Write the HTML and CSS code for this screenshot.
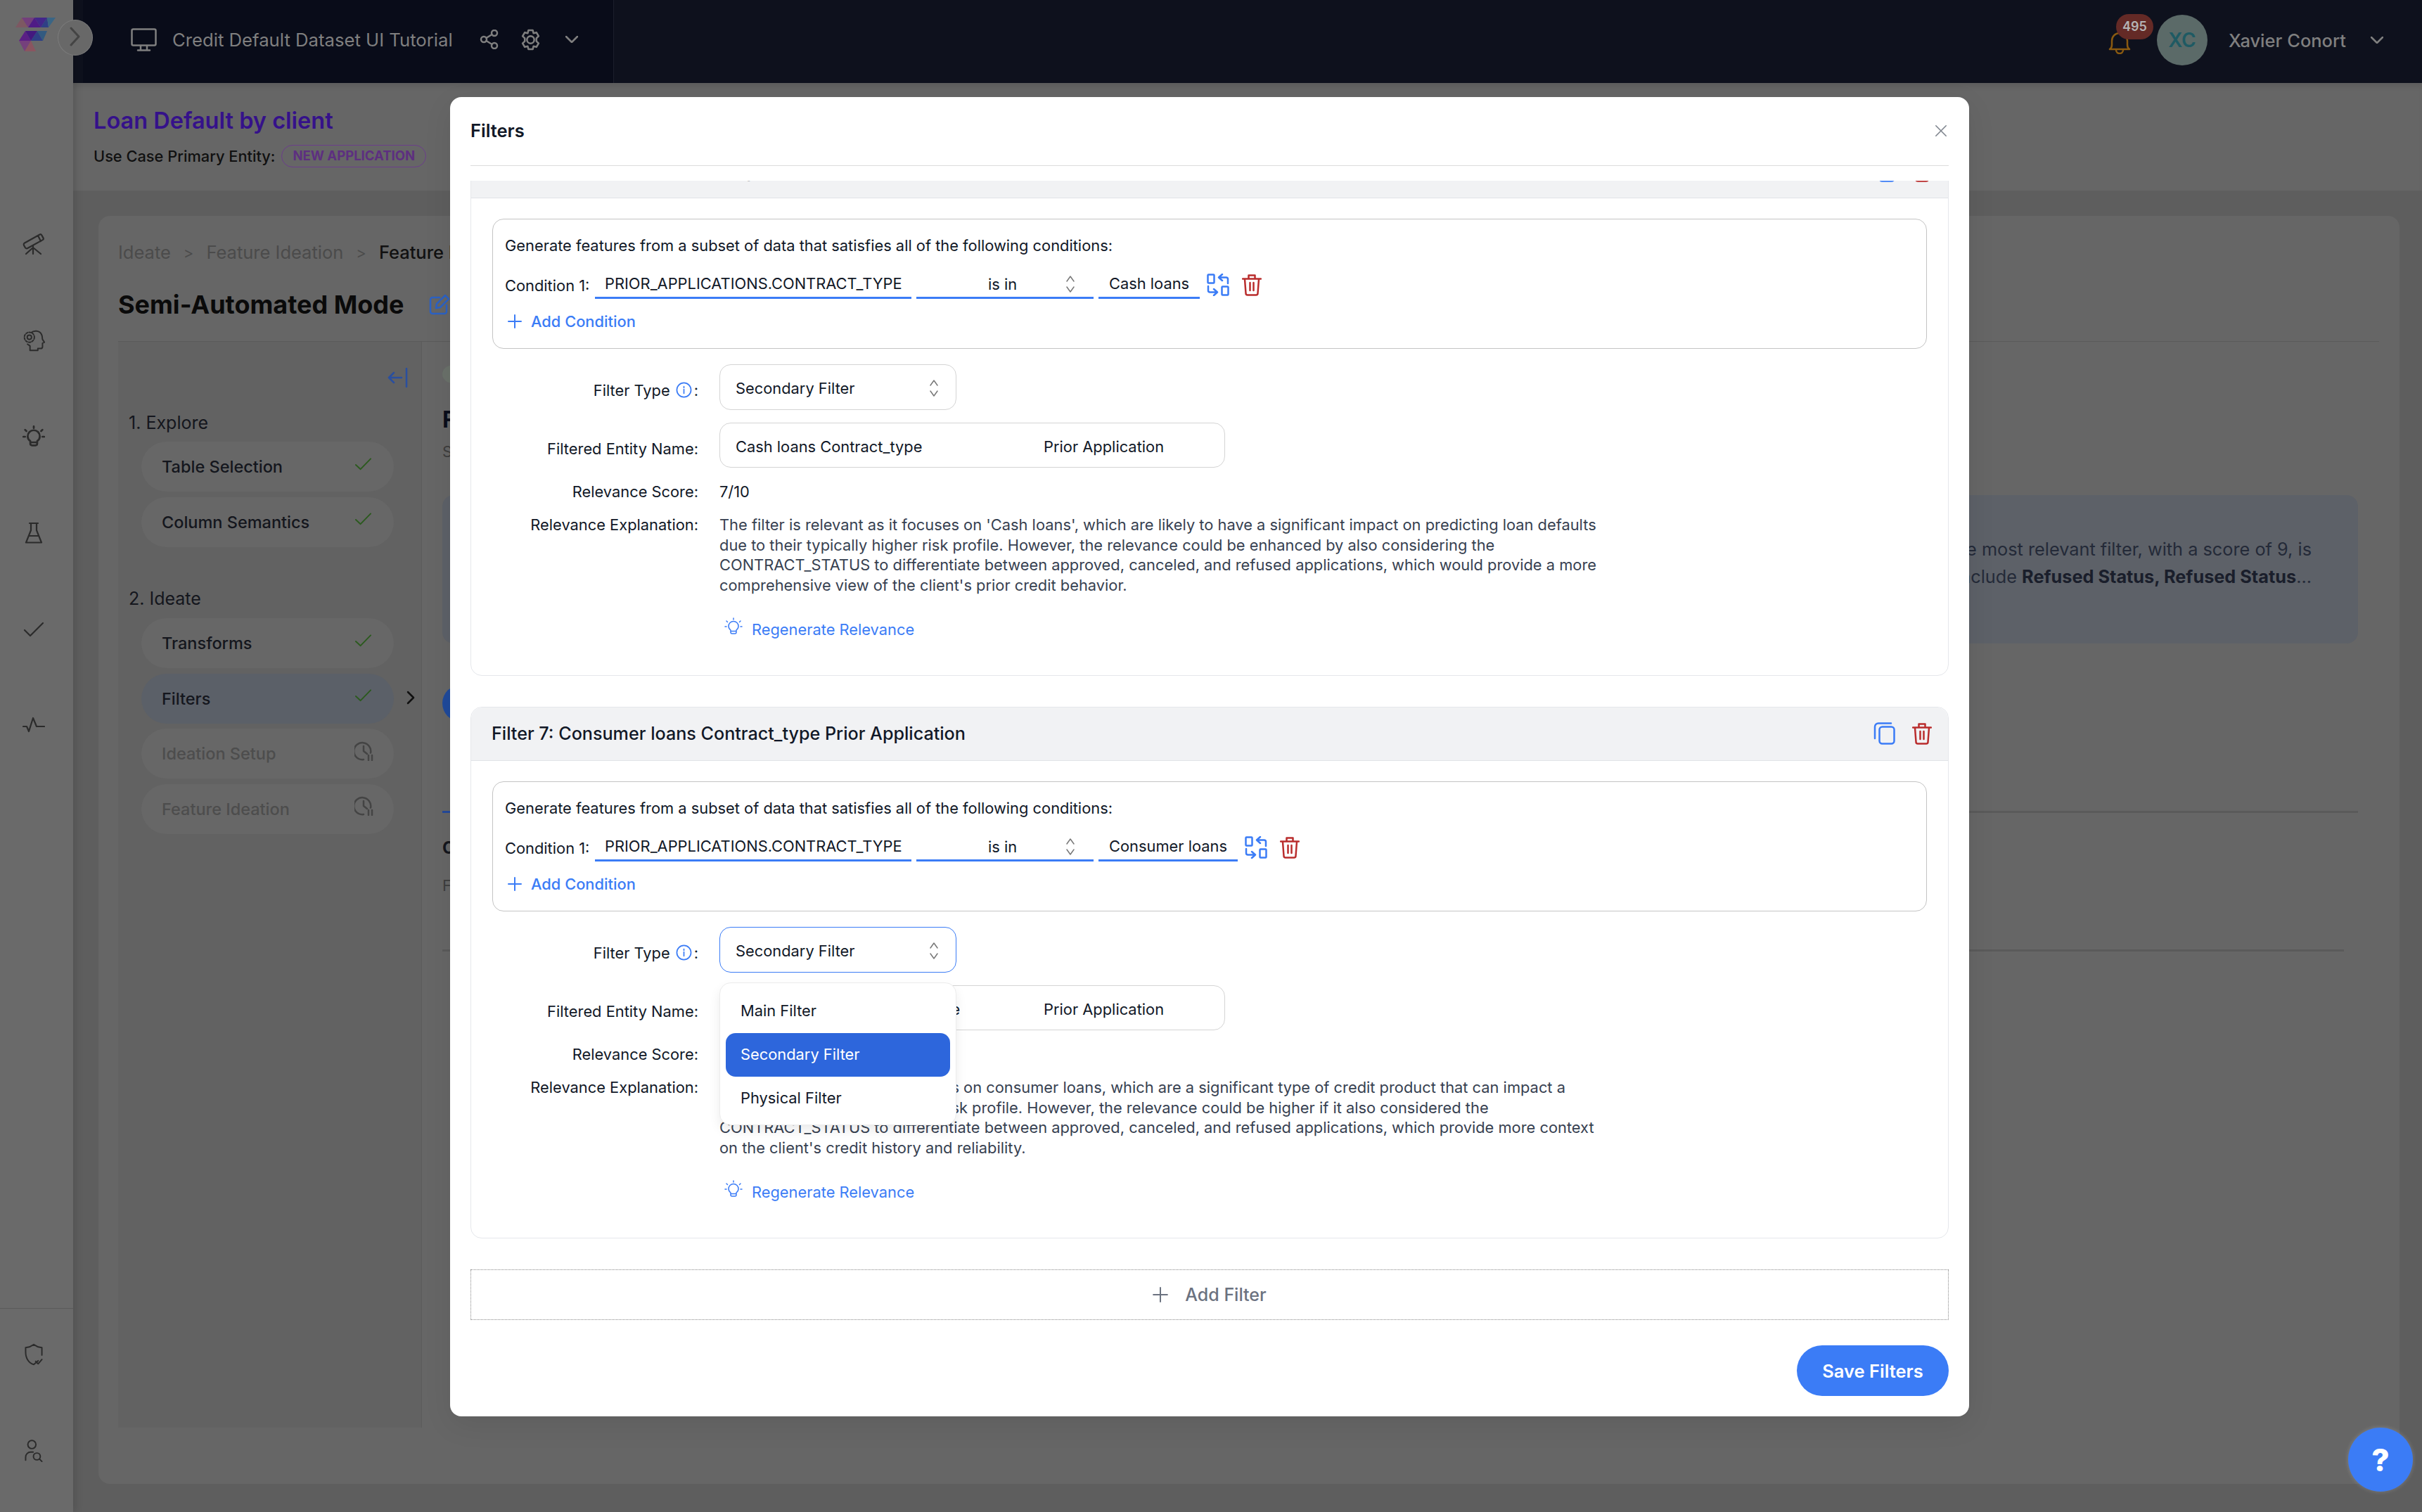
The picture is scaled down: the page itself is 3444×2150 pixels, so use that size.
FILE: index.html
```html
<!DOCTYPE html>
<html lang="en">
<head>
  <meta charset="UTF-8">
  <meta name="viewport" content="width=device-width, initial-scale=1.0">
  <title>Credit Default Dataset UI Tutorial</title>
  <link rel="stylesheet" href="styles.css">
</head>
<body>
  <svg class="sprite" aria-hidden="true">
    <symbol id="i-swap" viewBox="0 0 32 32"><rect x="1.500" y="1.500" width="9" height="12" rx="1"/><rect x="21.500" y="18.500" width="9" height="12" rx="1"/><path d="M30 14V8a2.500 2.500 0 0 0-2.500-2.500H17M22 1l-5 4.500 5 4.500M2 18v6a2.500 2.500 0 0 0 2.500 2.500H15M10 22l5 4.500-5 4.500"/></symbol>
    <symbol id="i-trash" viewBox="0 0 28 32"><path d="M1 7.500h26M9.500 7V2.500h9V7M4 8l1.500 20a2.500 2.500 0 0 0 2.500 2.500h12a2.500 2.500 0 0 0 2.500-2.500L24 8M11.500 13v11M16.500 13v11"/></symbol>
    <symbol id="i-copy" viewBox="0 0 32 32"><rect x="8.500" y="6.500" width="21" height="24" rx="4"/><path d="M25 1.500H7a5 5 0 0 0-5 5V23"/></symbol>
    <symbol id="i-updown" viewBox="0 0 14 26"><path d="M2 9l5-7 5 7M2 17l5 7 5-7"/></symbol>
    <symbol id="i-info" viewBox="0 0 24 24"><circle cx="12" cy="12" r="10.500"/><path d="M12 11v6M12 7v1.500"/></symbol>
    <symbol id="i-bulb" viewBox="0 0 26 26"><path d="M13 1v2M3 5l1.500 1.500M23 5l-1.500 1.500M1 13h2M23 13h2M9 18c-2-1.500-3-3.500-3-5.500a7 7 0 0 1 14 0c0 2-1 4-3 5.500v3a2 2 0 0 1-2 2h-4a2 2 0 0 1-2-2zM9 19.500h8"/></symbol>
    <symbol id="i-plus" viewBox="0 0 20 20"><path d="M10 1v18M1 10h18"/></symbol>
    <symbol id="i-check" viewBox="0 0 24 18"><path d="M1 10l7 6.500L23 1"/></symbol>
    <symbol id="i-clock" viewBox="0 0 28 28"><path d="M23 16.500A12 12 0 1 0 13 26M13 7v7l5 4M20 20v7M25 20v7"/></symbol>
    <symbol id="i-chev-down" viewBox="0 0 18 10"><path d="M1 1l8 8 8-8"/></symbol>
  </svg>

  <aside class="rail">
    <svg class="logo" viewBox="0 0 57 48">
      <polygon points="0,14 9,0 18,14" fill="#7d5862"/>
      <polygon points="9,0 27,0 18,14" fill="#733f7c"/>
      <polygon points="18,14 27,0 36,14" fill="#4f1b86"/>
      <polygon points="27,0 45,0 36,14" fill="#43268a"/>
      <polygon points="36,14 45,0 47,14" fill="#2f3f86"/>
      <polygon points="45,0 57,0 47,14" fill="#3a6585"/>
      <polygon points="5,33 14,19 22,33" fill="#5a1f85"/>
      <polygon points="14,19 31,19 22,33" fill="#43187f"/>
      <polygon points="22,33 31,19 39,33" fill="#2f3f86"/>
      <polygon points="31,19 45,19 39,33" fill="#325a80"/>
      <polygon points="5,33 22,33 13,48" fill="#75407c"/>
      <polygon points="13,48 22,33 29,48" fill="#8a5560"/>
    </svg>
    <nav class="rail-nav">
      <svg class="rail-icon" viewBox="0 0 32 32"><path d="M3 14.500L24.500 2.500a2 2 0 0 1 2.700.8l2.300 4.100a2 2 0 0 1-.8 2.700L7.200 22a2.500 2.500 0 0 1-3.400-1l-1.700-3a2.500 2.500 0 0 1 .9-3.500zM22 4l4 8M15 17.500V30M15 21L5 30M15 21l11 9"/></svg>
      <svg class="rail-icon" viewBox="0 0 36 36"><path d="M12 34v-7c-1-1-3-2-4-3M14 5.500C17 2.500 28 .500 31 10c1 3 .5 5 1 6.500l3 4.500-3 1.500V28a3 3 0 0 1-3 3h-4.500v3H12"/><circle cx="11" cy="13" r="3.500"/><circle cx="11" cy="13" r="8" stroke-dasharray="3 2.300"/></svg>
      <svg class="rail-icon" viewBox="0 0 26 26"><use href="#i-bulb"/></svg>
      <svg class="rail-icon" viewBox="0 0 32 32"><path d="M10 2h12M12 2v10L5 29.500h22L20 12V2M9 20h14"/></svg>
      <svg class="rail-icon" viewBox="0 0 32 32"><path d="M3 17l8 8L29 7"/></svg>
      <svg class="rail-icon" viewBox="0 0 32 32"><path d="M1 17h5l3 7 6-19 5 12h11"/></svg>
    </nav>
    <div class="rail-bottom">
      <svg class="rail-icon" viewBox="0 0 32 36"><path d="M3 7l6-1 7-4 7 4 6 1v12M23 28l-7 6C8 32 3 24 3 14V7M19 29l4 4 6-7"/></svg>
      <svg class="rail-icon" viewBox="0 0 32 36"><circle cx="13" cy="8" r="6.500"/><path d="M3 33v-5a8 8 0 0 1 8-8h4"/><circle cx="21" cy="27" r="5.500"/><path d="M25 31l4 4"/></svg>
    </div>
  </aside>
  <button class="rail-toggle"><svg viewBox="0 0 16 28"><path d="M2 2l11 12L2 26"/></svg></button>

  <div class="main">
    <header class="topbar">
      <div class="project">
        <svg class="project-icon" viewBox="0 0 37 33"><rect x="1.500" y="1.500" width="34" height="23" rx="2"/><path d="M14 25v6M23 25v6M10 31.500h17"/></svg>
        <span class="project-name">Credit Default Dataset UI Tutorial</span>
        <svg class="share-icon" viewBox="0 0 28 28"><circle cx="21" cy="5" r="4"/><circle cx="6" cy="14" r="4"/><circle cx="21" cy="23" r="4"/><path d="M9.500 12l8-5M9.500 16l8 5"/></svg>
        <svg class="gear-icon" viewBox="0 0 30 30"><circle cx="15" cy="15" r="5"/><path d="M12 2h6l1 4 4-1 3 5-3 3v4l3 3-3 5-4-1-1 4h-6l-1-4-4 1-3-5 3-3v-4l-3-3 3-5 4 1z"/></svg>
        <svg class="chev" viewBox="0 0 18 10"><use href="#i-chev-down"/></svg>
      </div>
      <div class="account">
        <div class="bell">
          <svg viewBox="0 0 32 32"><path d="M2 25h28c-2-1.500-3-3-3-6v-6a11 11 0 0 0-22 0v6c0 3-1 4.500-3 6zM11 26a5 5 0 0 0 10 0"/></svg>
          <span class="badge">495</span>
        </div>
        <div class="avatar">XC</div>
        <span class="user-name">Xavier Conort</span>
        <svg class="chev" viewBox="0 0 18 10"><use href="#i-chev-down"/></svg>
      </div>
    </header>

    <section class="usecase">
      <h1>Loan Default by client</h1>
      <div class="entity">
        <span>Use Case Primary Entity:</span>
        <span class="entity-tag">NEW APPLICATION</span>
      </div>
    </section>

    <div class="content">
      <div class="page-card">
        <div class="crumbs">
          <span>Ideate</span><i>&gt;</i><span>Feature Ideation</span><i>&gt;</i><span class="crumb-now">Feature Ideation Setup</span>
        </div>
        <div class="mode-title">
          <h2>Semi-Automated Mode</h2>
          <svg class="edit-icon" viewBox="0 0 30 30"><path d="M15 5H5a3 3 0 0 0-3 3v17a3 3 0 0 0 3 3h17a3 3 0 0 0 3-3V16M10 20l1-6L23 2l5 5-12 12z"/></svg>
        </div>
        <div class="workspace">
          <div class="steps">
            <svg class="collapse" viewBox="0 0 30 28"><path d="M28 1v26M21 14H3M10 7l-7 7 7 7"/></svg>
            <h3>1. Explore</h3>
            <div class="step">Table Selection<svg class="tick"><use href="#i-check"/></svg></div>
            <div class="step">Column Semantics<svg class="tick"><use href="#i-check"/></svg></div>
            <h3 class="second">2. Ideate</h3>
            <div class="step">Transforms<svg class="tick"><use href="#i-check"/></svg></div>
            <div class="step step-on">Filters<svg class="tick"><use href="#i-check"/></svg><svg class="step-arrow" viewBox="0 0 12 20"><path d="M2 2l8 8-8 8"/></svg></div>
            <div class="step step-off">Ideation Setup<svg class="clock"><use href="#i-clock"/></svg></div>
            <div class="step step-off">Feature Ideation<svg class="clock"><use href="#i-clock"/></svg></div>
          </div>
          <div class="detail">
            <div class="detail-dot"></div>
            <h4>Filters</h4>
            <p class="detail-sub">Select filters</p>
            <div class="summary">
              <p>The most relevant filter, with a score of 9, is</p>
              <p>Top filters include <b>Refused Status, Refused Status</b>...</p>
            </div>
            <div class="run-dot"></div>
            <div class="tabs"><span></span></div>
            <h5>Consumer</h5>
            <p class="detail-note">Filters</p>
            <div class="detail-rule"></div>
          </div>
        </div>
      </div>
    </div>
  </div>

  <div class="modal">
    <div class="modal-head">
      <span>Filters</span>
      <svg class="close" viewBox="0 0 20 20"><path d="M2 2l16 16M18 2L2 18"/></svg>
    </div>
    <div class="modal-scroll">
      <!-- Filter 6, scrolled partly out of view -->
      <div class="filter-card first">
        <div class="filter-head">
          <span>Filter 6: Cash loans Contract_type Prior Application</span>
          <svg class="ic-copy"><use href="#i-copy"/></svg>
          <svg class="ic-trash-lg"><use href="#i-trash"/></svg>
        </div>
        <div class="filter-body">
          <div class="conditions">
            <p>Generate features from a subset of data that satisfies all of the following conditions:</p>
            <div class="cond-row">
              <span class="cond-label">Condition 1:</span>
              <span class="cond-col">PRIOR_APPLICATIONS.CONTRACT_TYPE</span>
              <span class="cond-op">is in<svg class="updown"><use href="#i-updown"/></svg></span>
              <span class="cond-val">Cash loans</span>
              <svg class="ic-swap"><use href="#i-swap"/></svg>
              <svg class="ic-trash"><use href="#i-trash"/></svg>
            </div>
            <div class="add-cond"><svg class="ic-plus"><use href="#i-plus"/></svg>Add Condition</div>
          </div>
          <div class="form-row type-row">
            <label>Filter Type<svg class="ic-info"><use href="#i-info"/></svg>:</label>
            <div class="select-box">Secondary Filter<svg class="updown"><use href="#i-updown"/></svg></div>
          </div>
          <div class="form-row name-row">
            <label>Filtered Entity Name:</label>
            <div class="name-box"><span>Cash loans Contract_type</span><span>Prior Application</span></div>
          </div>
          <div class="form-row score-row">
            <label>Relevance Score:</label>
            <span>7/10</span>
          </div>
          <div class="form-row why-row">
            <label>Relevance Explanation:</label>
            <p>The filter is relevant as it focuses on 'Cash loans', which are likely to have a significant impact on predicting loan defaults<br>due to their typically higher risk profile. However, the relevance could be enhanced by also considering the<br>CONTRACT_STATUS to differentiate between approved, canceled, and refused applications, which would provide a more<br>comprehensive view of the client's prior credit behavior.</p>
          </div>
          <div class="regen"><svg class="ic-bulb"><use href="#i-bulb"/></svg>Regenerate Relevance</div>
        </div>
      </div>

      <div class="filter-card">
        <div class="filter-head">
          <span>Filter 7: Consumer loans Contract_type Prior Application</span>
          <svg class="ic-copy"><use href="#i-copy"/></svg>
          <svg class="ic-trash-lg"><use href="#i-trash"/></svg>
        </div>
        <div class="filter-body">
          <div class="conditions">
            <p>Generate features from a subset of data that satisfies all of the following conditions:</p>
            <div class="cond-row">
              <span class="cond-label">Condition 1:</span>
              <span class="cond-col">PRIOR_APPLICATIONS.CONTRACT_TYPE</span>
              <span class="cond-op">is in<svg class="updown"><use href="#i-updown"/></svg></span>
              <span class="cond-val">Consumer loans</span>
              <svg class="ic-swap"><use href="#i-swap"/></svg>
              <svg class="ic-trash"><use href="#i-trash"/></svg>
            </div>
            <div class="add-cond"><svg class="ic-plus"><use href="#i-plus"/></svg>Add Condition</div>
          </div>
          <div class="form-row type-row">
            <label>Filter Type<svg class="ic-info"><use href="#i-info"/></svg>:</label>
            <div class="select-box open">Secondary Filter<svg class="updown"><use href="#i-updown"/></svg>
              <ul class="menu">
                <li>Main Filter</li>
                <li class="picked">Secondary Filter</li>
                <li>Physical Filter</li>
              </ul>
            </div>
          </div>
          <div class="form-row name-row">
            <label>Filtered Entity Name:</label>
            <div class="name-box"><span>Consumer loans Contract_type</span><span>Prior Application</span></div>
          </div>
          <div class="form-row score-row">
            <label>Relevance Score:</label>
            <span>7/10</span>
          </div>
          <div class="form-row why-row">
            <label>Relevance Explanation:</label>
            <p>The filter is relevant as it focuses on consumer loans, which are a significant type of credit product that can impact a<br>borrower's individual financial risk profile. However, the relevance could be higher if it also considered the<br>CONTRACT_STATUS to differentiate between approved, canceled, and refused applications, which provide more context<br>on the client's credit history and reliability.</p>
          </div>
          <div class="regen"><svg class="ic-bulb"><use href="#i-bulb"/></svg>Regenerate Relevance</div>
        </div>
      </div>

      <div class="add-filter"><svg class="ic-plus-grey"><use href="#i-plus"/></svg>Add Filter</div>
    </div>
    <div class="modal-foot">
      <button class="save">Save Filters</button>
    </div>
  </div>

  <button class="help">?</button>
</body>
</html>
```

FILE: styles.css
```css
* {
  box-sizing: border-box;
}

html, body {
  height: 100%;
}

body {
  margin: 0;
  display: flex;
  position: relative;
  overflow: hidden;
  font-family: Inter, "Liberation Sans", sans-serif;
  font-size: 20px;
  background-color: #5e5e5e;
  color: #111827;
}

h1, h2, h3, h4, h5, p, ul {
  margin: 0;
  padding: 0;
}

svg {
  fill: none;
  stroke: currentColor;
  stroke-width: 2.5;
  stroke-linecap: round;
  stroke-linejoin: round;
  flex-shrink: 0;
}

.sprite {
  display: none;
}

/* left rail */
.rail {
  width: 104px;
  flex-shrink: 0;
  display: flex;
  flex-direction: column;
  align-items: center;
  padding-right: 8px;
  background-color: #6a6a6a;
  box-shadow: 4px 0 10px rgba(0, 0, 0, 0.12);
  color: #2b2b2b;
  z-index: 1;
}

.logo {
  width: 57px;
  height: 48px;
  margin: 25px 0 0 5px;
  stroke: none;
}

.rail-nav {
  display: flex;
  flex-direction: column;
  align-items: center;
  gap: 105px;
  margin-top: 258px;
}

.rail-icon {
  width: 32px;
  height: 32px;
  stroke-width: 2.2;
}

.rail-bottom {
  margin: auto -8px 0 0;
  width: 104px;
  height: 290px;
  padding: 49px 8px 0 0;
  border-top: 1px solid #5a5a5a;
  display: flex;
  flex-direction: column;
  align-items: center;
  gap: 105px;
}

.rail-toggle {
  position: absolute;
  left: 82px;
  top: 28px;
  width: 50px;
  height: 51px;
  padding: 0;
  border: 1px solid #7c7c7c;
  border-radius: 50%;
  background-color: #686868;
  color: #444;
  z-index: 2;
}

.rail-toggle svg {
  width: 16px;
  height: 28px;
  stroke-width: 3;
}

.main {
  flex: 1;
  min-width: 0;
  display: flex;
  flex-direction: column;
}

/* top bar */
.topbar {
  height: 118px;
  flex-shrink: 0;
  display: flex;
  justify-content: space-between;
  background-color: #0e111d;
  color: #7f7f7f;
}

.project {
  width: 755px;
  margin-left: 14px;
  padding: 0 0 6px 68px;
  display: flex;
  align-items: center;
  background-color: #090c19;
  border-right: 1px solid #1c1f2b;
}

.project-icon {
  width: 37px;
  height: 33px;
}

.project-name {
  margin: 0 38px 0 22px;
  font-size: 25.700px;
  white-space: nowrap;
}

.share-icon {
  width: 28px;
  height: 28px;
  margin-right: 29px;
}

.gear-icon {
  width: 31px;
  height: 31px;
  margin-right: 34px;
}

.chev {
  width: 18px;
  height: 10px;
}

.account {
  display: flex;
  align-items: center;
  padding: 0 55px 4px 0;
}

.bell {
  position: relative;
  width: 32px;
  height: 32px;
  color: #8a5a10;
  margin-top: 8px;
}

.bell svg {
  width: 32px;
  height: 32px;
}

.badge {
  position: absolute;
  left: 11px;
  top: -25px;
  width: 53px;
  height: 36px;
  border-radius: 18px;
  background-color: #642a26;
  color: #b4b4b4;
  font-size: 18px;
  font-weight: 600;
  line-height: 36px;
  text-align: center;
}

.avatar {
  width: 72px;
  height: 72px;
  margin-left: 37px;
  border-radius: 50%;
  background-color: #5b6a68;
  color: #1f5a63;
  font-size: 28px;
  font-weight: 600;
  line-height: 72px;
  text-align: center;
}

.user-name {
  margin: 0 35px 0 30px;
  font-size: 25.500px;
  font-weight: 500;
}

/* use case strip */
.usecase {
  height: 153px;
  flex-shrink: 0;
  padding: 35px 0 0 29px;
  background-color: #666;
  box-shadow: inset 0 8px 8px -4px rgba(0, 0, 0, 0.1);
}

.usecase h1 {
  font-size: 32.500px;
  font-weight: 600;
  line-height: 38px;
  color: #35118a;
}

.entity {
  margin-top: 15px;
  display: flex;
  align-items: center;
  gap: 9px;
  font-size: 21.800px;
  font-weight: 500;
  color: #101010;
}

.entity-tag {
  height: 32px;
  padding: 0 15px;
  border: 1.500px solid #6b3d8b;
  border-radius: 16px;
  color: #5d2f80;
  font-size: 18.500px;
  font-weight: 700;
  line-height: 28px;
}

/* page behind the dialog */
.content {
  flex: 1;
  padding: 36px 32px 40px 36px;
  min-height: 0;
}

.page-card {
  height: 100%;
  padding: 36px 29px 80px 28px;
  display: flex;
  flex-direction: column;
  border-radius: 16px;
  background-color: #666;
}

.crumbs {
  display: flex;
  gap: 18px;
  font-size: 25.500px;
  line-height: 32px;
  color: #4b4b4b;
}

.crumbs i {
  font-style: normal;
  font-size: 22px;
}

.crumb-now {
  color: #111;
  font-weight: 500;
}

.mode-title {
  margin-top: 36px;
  display: flex;
  align-items: center;
  gap: 36px;
}

.mode-title h2 {
  font-size: 36px;
  font-weight: 700;
  line-height: 44px;
  color: #0a0a0a;
}

.edit-icon {
  width: 30px;
  height: 30px;
  color: #2c62c4;
}

.workspace {
  flex: 1;
  margin-top: 30px;
  display: flex;
  border-top: 1px solid #5a5a5a;
  min-height: 0;
}

.steps {
  width: 432px;
  flex-shrink: 0;
  padding: 37px 0 0 15px;
  display: flex;
  flex-direction: column;
  background-color: #626262;
  border-right: 1px solid #5c5c5c;
}

.collapse {
  width: 30px;
  height: 28px;
  margin-left: 367px;
  color: #2a4f9f;
  flex-shrink: 0;
}

.steps h3 {
  margin: 35px 0 12px;
  font-size: 25px;
  font-weight: 400;
  line-height: 30px;
  color: #14161d;
}

.steps h3.second {
  margin: 51px 0 13px;
}

.step {
  position: relative;
  width: 359px;
  height: 71px;
  margin: 0 0 7.500px 18px;
  padding: 0 32px 0 29px;
  flex-shrink: 0;
  display: flex;
  justify-content: space-between;
  align-items: center;
  border-radius: 36px;
  background-color: #676767;
  font-size: 23.500px;
  font-weight: 500;
  color: #14161d;
}

.step-on {
  background-color: #5b6068;
}

.step-off {
  color: #4d4d4d;
}

.tick {
  width: 23px;
  height: 18px;
  margin-top: -8px;
  color: #2b5a1e;
  stroke-width: 2;
}

.clock {
  width: 28px;
  height: 28px;
  margin: -8px -4px 0 0;
  color: #444;
}

.step-arrow {
  position: absolute;
  right: -30px;
  top: 24px;
  width: 12px;
  height: 20px;
  color: #111;
}

.detail {
  flex: 1;
  min-width: 0;
  padding: 33px 30px 0 29px;
}

.detail-dot {
  width: 30px;
  height: 26px;
  border-radius: 50%;
  background-color: #6a716a;
}

.detail h4 {
  margin-top: 32px;
  font-size: 32px;
  font-weight: 700;
  line-height: 40px;
  color: #0a0d1a;
}

.detail-sub {
  margin-top: 10px;
  font-size: 22px;
  line-height: 30px;
  color: #3d3d3d;
}

.summary {
  margin-top: 47px;
  height: 211px;
  padding: 58px 66px 0 0;
  border-radius: 16px;
  background-color: #5d6168;
  color: #242a38;
  font-size: 25.300px;
  line-height: 38.500px;
  text-align: right;
  white-space: nowrap;
}

.summary b {
  font-weight: 700;
  color: #1a1e2b;
}

.run-dot {
  margin-top: 59px;
  width: 52px;
  height: 52px;
  border-radius: 50%;
  background-color: #1f4a9b;
}

.tabs {
  margin-top: 127px;
  height: 3px;
  background-color: #5a5a5a;
}

.tabs span {
  display: block;
  width: 40px;
  height: 3px;
  background-color: #24499a;
}

.detail h5 {
  margin-top: 35px;
  font-size: 24px;
  font-weight: 700;
  line-height: 30px;
  color: #14161d;
}

.detail-note {
  margin-top: 23px;
  font-size: 22px;
  line-height: 30px;
  color: #3d3d3d;
}

.detail-rule {
  margin: 76px 20px 0 0;
  height: 3px;
  background-color: #5a5a5a;
}

/* dialog */
.modal {
  position: absolute;
  left: 640px;
  top: 138px;
  width: 2160px;
  height: 1876px;
  display: flex;
  flex-direction: column;
  padding: 0 29px 29px;
  border-radius: 16px;
  background-color: white;
  box-shadow: 0 12px 40px rgba(0, 0, 0, 0.08);
  font-size: 21.850px;
  z-index: 3;
}

.modal-head {
  height: 98px;
  flex-shrink: 0;
  display: flex;
  justify-content: space-between;
  align-items: center;
  padding: 0 2px 2px 0;
  border-bottom: 1px solid #dcdcdc;
  font-size: 25.500px;
  font-weight: 600;
  color: #111827;
}

.close {
  width: 18px;
  height: 18px;
  color: #7f858e;
  stroke-width: 1.800;
}

.modal-scroll {
  flex: 1;
  min-height: 0;
  margin-top: 21px;
  overflow: hidden;
}

.filter-card {
  margin-bottom: 44px;
  height: 756px;
  border: 1px solid #e5e7eb;
  border-radius: 16px;
}

.filter-card.first {
  margin-top: -52px;
}

.filter-head {
  height: 76px;
  padding: 0 23px 2px 29px;
  display: flex;
  align-items: center;
  border-bottom: 1px solid #e1e3e7;
  border-radius: 16px 16px 0 0;
  background-color: #f1f2f4;
  font-size: 25.150px;
  font-weight: 500;
}

.filter-head span {
  flex: 1;
}

.ic-copy {
  width: 32px;
  height: 32px;
  color: #3b7cf6;
}

.ic-trash-lg {
  width: 28px;
  height: 32px;
  margin-left: 23px;
  color: #b92d2d;
}

.filter-body {
  padding: 29px 30px 0;
}

.conditions {
  height: 185px;
  padding: 22px 17px 0;
  border: 1px solid #c4c4c4;
  border-radius: 16px;
}

.conditions p {
  line-height: 30px;
}

.cond-row {
  margin-top: 21px;
  display: flex;
  align-items: center;
}

.cond-label {
  width: 128px;
  padding-top: 2px;
  white-space: nowrap;
}

.cond-col, .cond-op, .cond-val {
  height: 40px;
  line-height: 36px;
  border-bottom: 3px solid #3b7cf6;
}

.cond-col {
  width: 450px;
  padding-left: 14px;
  white-space: nowrap;
}

.cond-op {
  width: 252px;
  margin-left: 7px;
  padding-left: 102px;
  display: flex;
  align-items: center;
  justify-content: space-between;
  padding-right: 26px;
}

.cond-val {
  margin-left: 7px;
  padding: 0 15px;
  white-space: nowrap;
}

.updown {
  width: 14px;
  height: 26px;
  color: #777;
  stroke-width: 1.500;
}

.ic-swap {
  width: 32px;
  height: 32px;
  margin-left: 10px;
  color: #3b7cf6;
}

.ic-trash {
  width: 28px;
  height: 32px;
  margin-left: 18px;
  color: #b92d2d;
}

.add-cond {
  margin: 18px 0 0 4px;
  display: flex;
  align-items: center;
  color: #3b7cf6;
  font-weight: 500;
  line-height: 28px;
}

.ic-plus {
  width: 20px;
  height: 20px;
  margin-right: 13px;
  stroke-width: 2;
}

.form-row {
  display: flex;
}

.form-row label {
  width: 293px;
  margin-right: 30px;
  display: flex;
  justify-content: flex-end;
  align-items: center;
  flex-shrink: 0;
}

.ic-info {
  width: 23px;
  height: 23px;
  margin: 0 3px 0 8px;
  color: #3b7cf6;
  stroke-width: 1.800;
}

.type-row {
  margin-top: 22px;
}

.type-row label {
  padding-top: 8px;
}

.select-box {
  position: relative;
  width: 337px;
  height: 65px;
  padding: 3px 24px 0 22px;
  display: flex;
  justify-content: space-between;
  align-items: center;
  border: 1px solid #d4d4d4;
  border-radius: 16px;
}

.select-box.open {
  border-color: #3b7cf6;
}

.menu {
  position: absolute;
  left: -1px;
  top: 78px;
  width: 337px;
  height: 203px;
  padding: 9px 8px;
  list-style: none;
  border: 1px solid #ececec;
  border-radius: 16px;
  background-color: white;
  box-shadow: 0 8px 16px rgba(0, 0, 0, 0.08);
  z-index: 1;
}

.menu li {
  height: 62px;
  padding-left: 21px;
  line-height: 60px;
  border-radius: 14px;
}

.menu .picked {
  background-color: #2d66dc;
  color: white;
}

.name-row {
  margin-top: 18px;
}

.name-row label {
  padding-top: 9px;
}

.name-box {
  width: 719px;
  height: 64px;
  padding: 3px 0 0 22px;
  display: flex;
  align-items: center;
  border: 1px solid #d4d4d4;
  border-radius: 16px;
}

.name-box span:first-child {
  width: 438px;
  flex-shrink: 0;
}

.score-row {
  margin-top: 20px;
  line-height: 28px;
}

.why-row {
  margin-top: 19px;
}

.why-row label {
  align-items: flex-start;
  line-height: 28.700px;
}

.why-row p {
  line-height: 28.700px;
  color: #374151;
  white-space: nowrap;
}

.regen {
  margin: 30px 0 0 330px;
  display: flex;
  align-items: center;
  color: #3b7cf6;
  line-height: 36px;
}

.ic-bulb {
  width: 26px;
  height: 26px;
  margin: -8px 13px 0 0;
  stroke-width: 1.500;
}

.add-filter {
  height: 72px;
  display: flex;
  justify-content: center;
  align-items: center;
  border: 1px dotted #888;
  color: #6b7280;
  font-size: 25px;
  font-weight: 500;
}

.ic-plus-grey {
  width: 22px;
  height: 22px;
  margin-right: 24px;
  stroke-width: 1.800;
}

.modal-foot {
  display: flex;
  justify-content: flex-end;
}

.save {
  width: 216px;
  height: 72px;
  border: none;
  border-radius: 36px;
  background-color: #3b7cf6;
  color: white;
  font-family: inherit;
  font-size: 25.500px;
  font-weight: 600;
}

.help {
  position: absolute;
  left: 3339px;
  top: 2030px;
  width: 92px;
  height: 91px;
  border: none;
  border-radius: 50%;
  background-color: #3b7cf6;
  box-shadow: 0 0 6px rgba(255, 255, 255, 0.2);
  color: white;
  font-family: inherit;
  font-size: 44px;
  font-weight: 800;
  z-index: 4;
}
```
